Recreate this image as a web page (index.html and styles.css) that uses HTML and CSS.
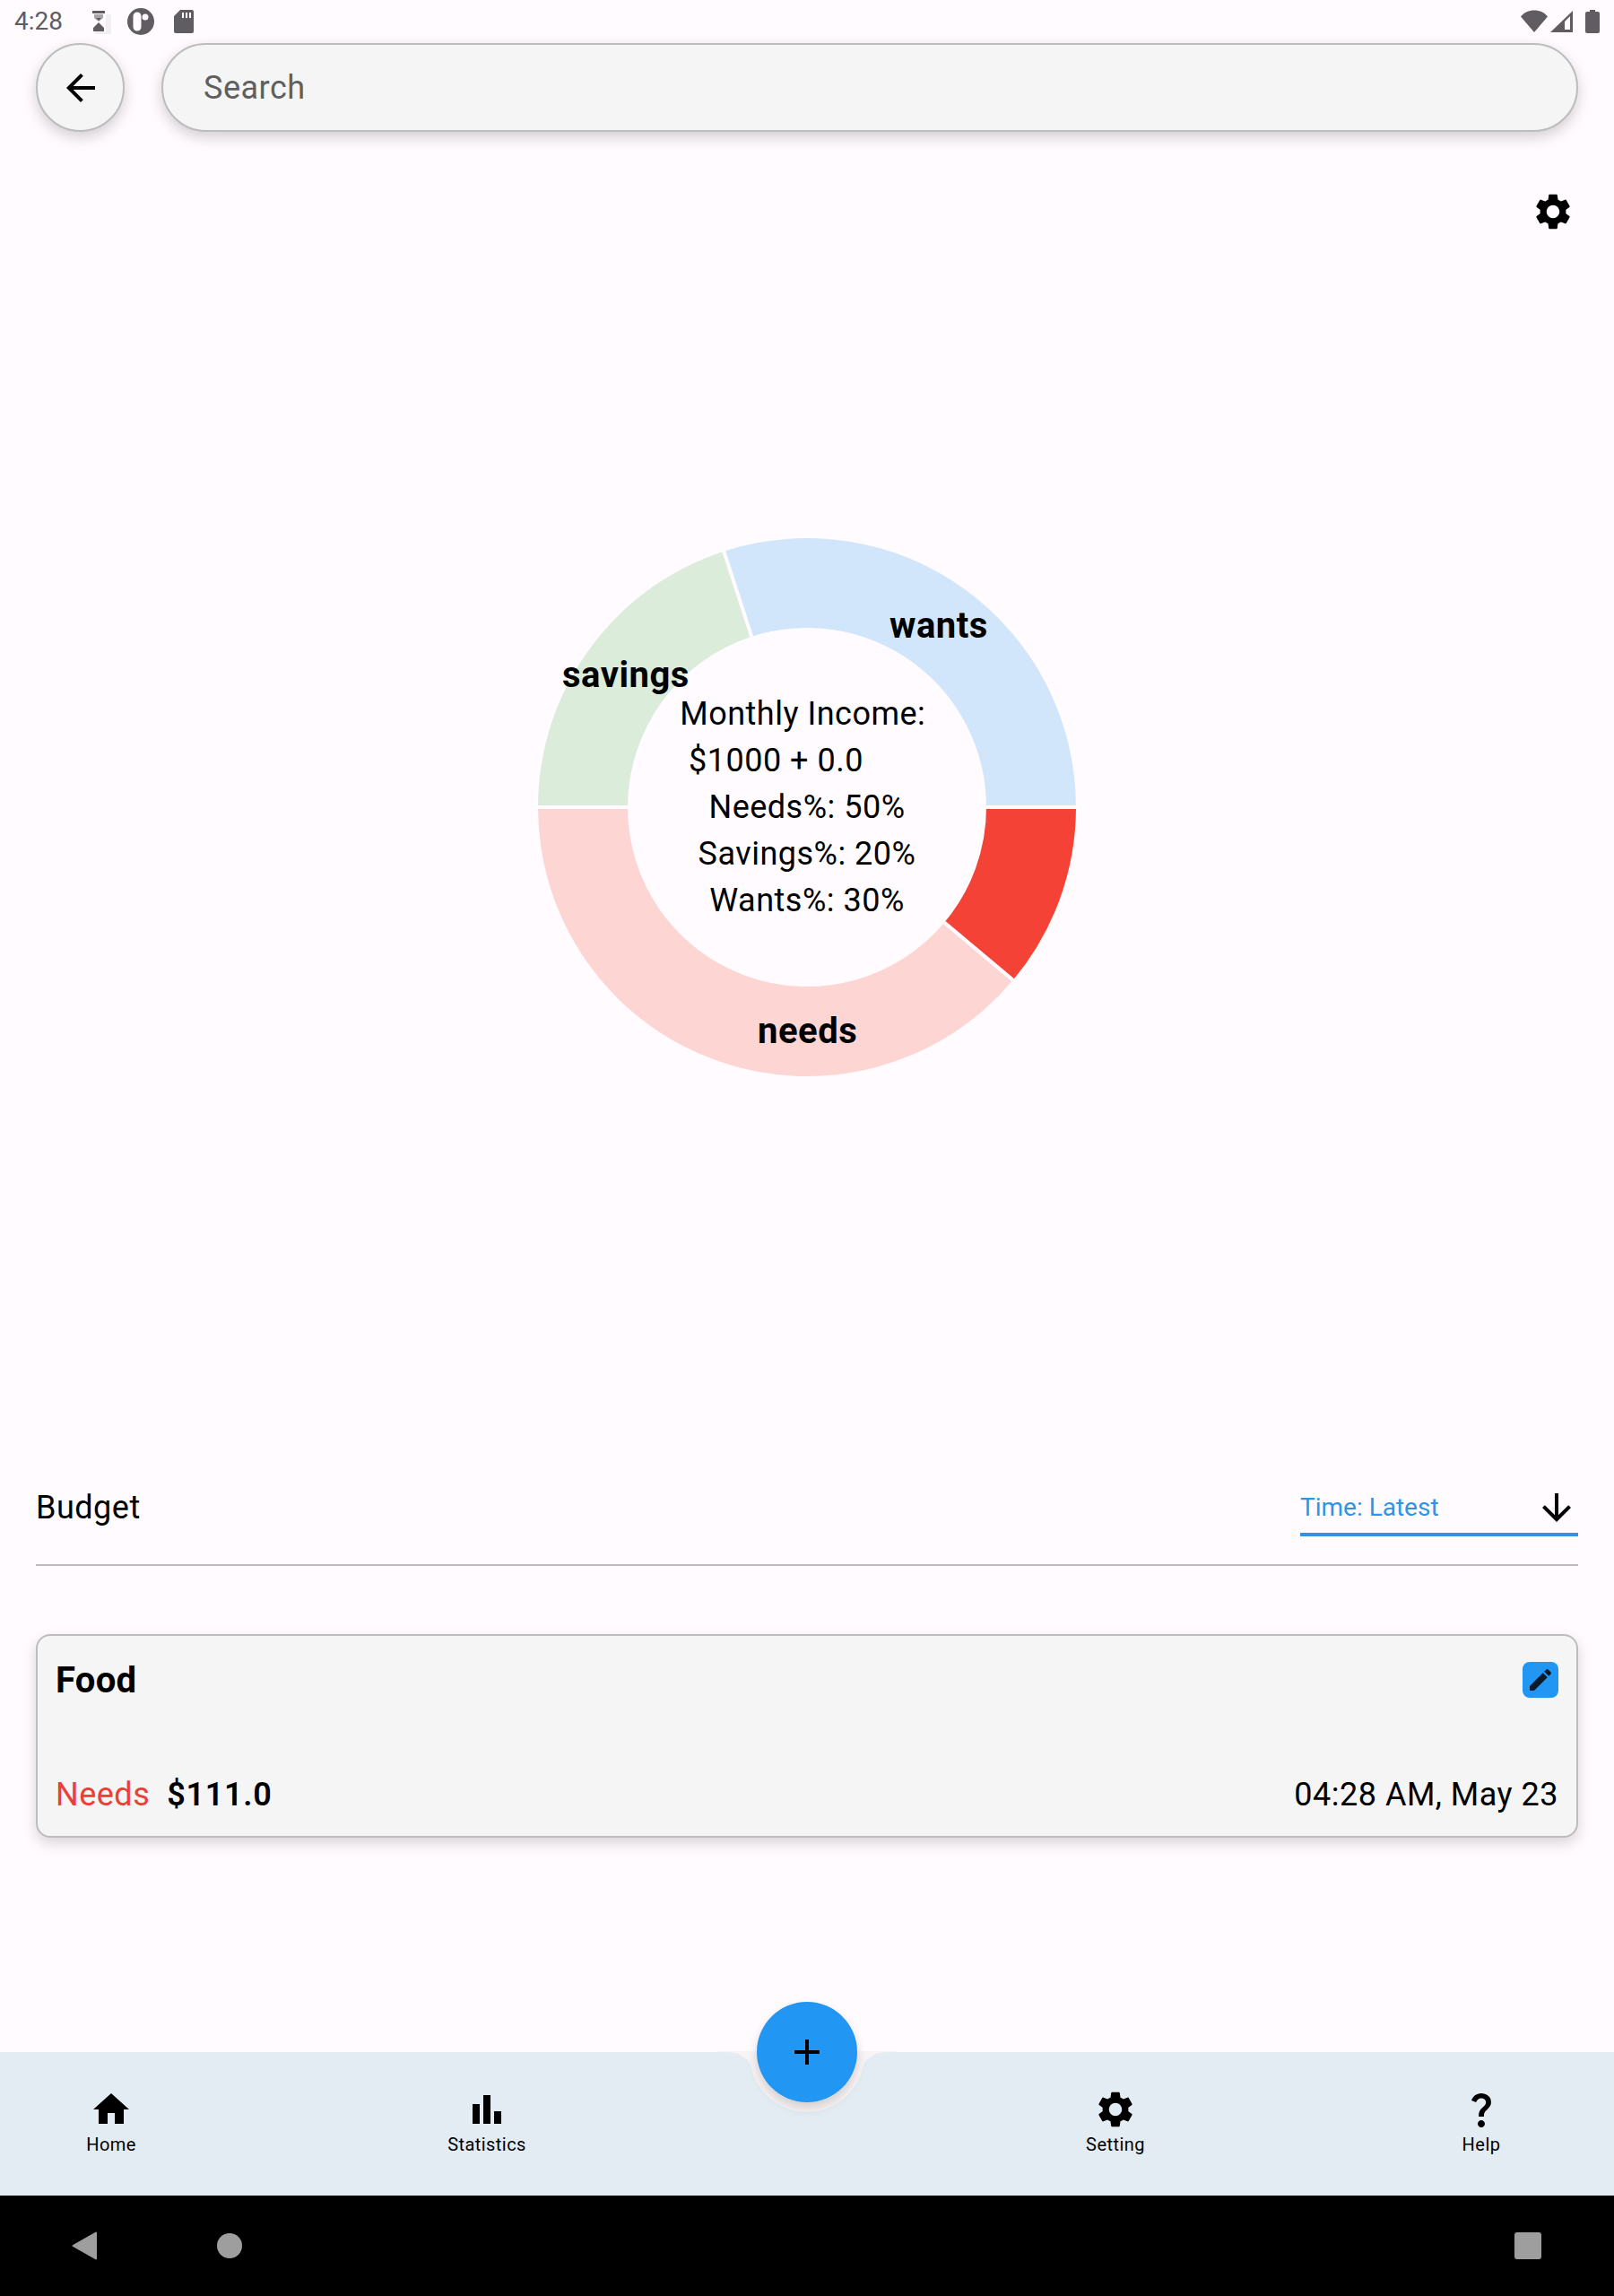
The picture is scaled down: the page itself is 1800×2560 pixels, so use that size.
FILE: index.html
```html
<!DOCTYPE html>
<html lang="en">
<head>
<meta charset="utf-8">
<title>Budget</title>
<link rel="stylesheet" href="styles.css">
</head>
<body>
<div class="screen">
  <div class="status">
    <span class="clock">4:28</span>
    <svg class="st-hour" viewBox="0 0 22 26"><path class="st-faint" d="M16 4h6v22H4v-3h12z"/><path class="st-mid" d="M3 4h10v4L8 12 3 8z"/><path class="st" d="M1 0h14v3H1zM8 13l6 6v4H2v-4zM5 8h6L8 11z"/></svg>
    <svg class="st-p" viewBox="0 0 30 30"><circle class="st" cx="15" cy="15" r="15"/><rect class="st-w" x="6.500" y="4.500" width="9" height="21" rx="4.500"/><circle class="st-w" cx="20" cy="10" r="3.500"/></svg>
    <svg class="st-sd" viewBox="0 0 22 26"><path class="st" d="M7 0h13a2 2 0 0 1 2 2v22a2 2 0 0 1-2 2H2a2 2 0 0 1-2-2V7z"/><path class="st-w" d="M9 3h2v6H9zM13 3h2v6h-2zM17 3h2v6h-2z"/></svg>
    <span class="status-fill"></span>
    <svg class="st-wifi" viewBox="0 0 30 26"><path class="st" d="M0 7.500C3.500 3 9 .5 15 .5S26.500 3 30 7.500L15 25z"/></svg>
    <svg class="st-sig" viewBox="0 0 25 24"><path class="st" d="M25 0v24H0zM22 6l-6 6v9h6z" fill-rule="evenodd"/></svg>
    <svg class="st-bat" viewBox="0 0 16 26"><path class="st" d="M5 0h6v2h3a2 2 0 0 1 2 2v20a2 2 0 0 1-2 2H2a2 2 0 0 1-2-2V4a2 2 0 0 1 2-2h3z"/></svg>
  </div>

  <div class="topbar">
    <div class="back">
      <svg class="i48" viewBox="0 0 24 24"><path d="M20 11H7.830l5.590-5.590L12 4l-8 8 8 8 1.410-1.410L7.830 13H20v-2z"/></svg>
    </div>
    <div class="search">Search</div>
  </div>

  <div class="gear-row">
    <svg class="i48" viewBox="0 0 24 24"><use href="#gear"/></svg>
  </div>

  <div class="chart">
    <svg class="donut" viewBox="0 0 600 600">
      <path class="seg-red" d="M600 300A300 300 0 0 1 529.800 492.800L453.200 428.600A200 200 0 0 0 500 300Z"/>
      <path class="seg-needs" d="M529.800 492.800A300 300 0 0 1 0 300H100A200 200 0 0 0 453.200 428.600Z"/>
      <path class="seg-savings" d="M0 300A300 300 0 0 1 207.300 14.700L238.200 109.800A200 200 0 0 0 100 300Z"/>
      <path class="seg-wants" d="M207.300 14.700A300 300 0 0 1 600 300H500A200 200 0 0 0 238.200 109.800Z"/>
      <path class="seg-gap" d="M100 300H-2M500 300H602M453.200 428.600L531.300 494.100M238.200 109.800L206.700 12.800"/>
    </svg>
    <div class="center-text">
      <div class="center-line">Monthly Income: </div>
      <div class="center-line center-income">$1000 + 0.0       </div>
      <div class="center-line">Needs%: 50%</div>
      <div class="center-line">Savings%: 20%</div>
      <div class="center-line">Wants%: 30%</div>
    </div>
    <span class="seg-label label-wants">wants</span>
    <span class="seg-label label-savings">savings</span>
    <span class="seg-label label-needs">needs</span>
  </div>

  <div class="budget-head">
    <span class="budget-title">Budget</span>
    <div class="dropdown">
      <span>Time: Latest</span>
      <svg class="i48" viewBox="0 0 24 24"><path d="M20 12l-1.410-1.410L13 16.170V4h-2v12.170l-5.580-5.590L4 12l8 8 8-8z"/></svg>
    </div>
  </div>
  <div class="rule"></div>

  <div class="card">
    <div class="card-top">
      <span class="card-name">Food</span>
      <span class="edit">
        <svg class="i32" viewBox="0 0 24 24"><path d="M3 17.250V21h3.750L17.810 9.940l-3.750-3.750L3 17.250zM20.710 7.040c.39-.39.39-1.020 0-1.410l-2.340-2.340c-.39-.39-1.020-.39-1.410 0l-1.830 1.830 3.750 3.750 1.830-1.830z"/></svg>
      </span>
    </div>
    <div class="card-bottom">
      <span class="card-type">Needs</span>
      <span class="card-amount">$111.0</span>
      <span class="card-date">04:28 AM, May 23</span>
    </div>
  </div>

  <div class="spacer"></div>

  <nav class="nav">
    <svg class="notch" viewBox="0 0 200 70"><path d="M0 0H8C22 0 31 4 37 14A64 64 0 0 0 163 14C169 4 178 0 192 0H200V-1H0Z"/></svg>
    <div class="fab">
      <svg class="i48" viewBox="0 0 24 24"><path d="M19 13h-6v6h-2v-6H5v-2h6V5h2v6h6v2z"/></svg>
    </div>
    <a class="nav-item nav-home">
      <svg class="i48" viewBox="0 0 24 24"><path d="M10 20v-6h4v6h5v-8h3L12 3 2 12h3v8z"/></svg>
      <span class="nav-label">Home</span>
    </a>
    <a class="nav-item nav-stats">
      <svg class="i48" viewBox="0 0 24 24"><path d="M4 9h4v11H4zm12 4h4v7h-4zm-6-9h4v16h-4z"/></svg>
      <span class="nav-label">Statistics</span>
    </a>
    <a class="nav-item nav-setting">
      <svg class="i48" viewBox="0 0 24 24"><use href="#gear"/></svg>
      <span class="nav-label">Setting</span>
    </a>
    <a class="nav-item nav-help">
      <svg class="i48" viewBox="0 0 24 24"><path d="M11.070 12.850c.77-1.390 2.250-2.210 3.110-3.440.91-1.290.4-3.700-2.180-3.700-1.690 0-2.520 1.280-2.870 2.340L6.540 6.960C7.250 4.830 9.180 3 11.990 3c2.350 0 3.960 1.070 4.780 2.410.7 1.150 1.110 3.300.03 4.900-1.200 1.770-2.350 2.310-2.970 3.450-.25.46-.35.76-.35 2.240h-2.890c-.01-.78-.13-2.050.48-3.150zM14 20c0 1.100-.9 2-2 2s-2-.9-2-2 .9-2 2-2 2 .9 2 2z"/></svg>
      <span class="nav-label">Help</span>
    </a>
  </nav>

  <div class="sysbar">
    <svg class="sys-back" viewBox="0 0 28 32"><path d="M27 1.500V30.500L1.500 16Z"/></svg>
    <span class="sys-home"></span>
    <span class="sys-fill"></span>
    <span class="sys-recent"></span>
  </div>
</div>

<svg class="defs" width="0" height="0">
  <defs>
    <path id="gear" d="M19.140 12.940c.04-.3.06-.61.06-.94 0-.32-.02-.64-.07-.94l2.030-1.580c.18-.14.23-.41.12-.61l-1.920-3.320c-.12-.22-.37-.29-.59-.22l-2.390.96c-.5-.38-1.030-.7-1.620-.94l-.36-2.540c-.04-.24-.24-.41-.48-.41h-3.840c-.24 0-.43.17-.47.41l-.36 2.540c-.59.24-1.130.57-1.620.94l-2.390-.96c-.22-.08-.47 0-.59.22L2.740 8.870c-.12.21-.08.47.12.61l2.030 1.580c-.05.3-.09.63-.09.94s.02.64.07.94l-2.030 1.580c-.18.14-.23.41-.12.61l1.920 3.320c.12.22.37.29.59.22l2.390-.96c.5.38 1.030.7 1.620.94l.36 2.540c.05.24.24.41.48.41h3.840c.24 0 .44-.17.47-.41l.36-2.540c.59-.24 1.130-.56 1.620-.94l2.390.96c.22.08.47 0 .59-.22l1.920-3.320c.12-.22.07-.47-.12-.61l-2.010-1.580zM12 15.600c-1.980 0-3.600-1.620-3.600-3.600s1.620-3.600 3.600-3.600 3.600 1.620 3.600 3.600-1.620 3.600-3.600 3.600z"/>
  </defs>
</svg>
</body>
</html>
```
FILE: styles.css
```css
* { box-sizing: border-box; }
html, body { margin: 0; padding: 0; }
body { font-family: Roboto, "Liberation Sans", sans-serif; color: #000; background: #fffbfe; }
.defs { position: absolute; }
.i48 { width: 48px; height: 48px; display: block; flex: none; }
.i32 { width: 32px; height: 32px; display: block; }

.screen { width: 1800px; height: 2560px; display: flex; flex-direction: column; position: relative; overflow: hidden; background: #fffbfe; }

.status { height: 48px; display: flex; align-items: flex-start; padding: 0 16px; flex: none; }
.clock { font-size: 28px; line-height: 48px; color: #5f5d61; width: 86px; }
.st { fill: #5f5d61; }
.st-mid { fill: #a8a6a8; }
.st-faint { fill: #f1eff0; }
.st-w { fill: #fffbfe; }
.st-hour { width: 22px; height: 26px; margin-top: 12px; }
.st-p { width: 30px; height: 30px; margin: 9px 0 0 18px; }
.st-sd { width: 22px; height: 26px; margin: 11px 0 0 22px; }
.status-fill { flex: 1; }
.st-wifi { width: 30px; height: 26px; margin-top: 11px; }
.st-sig { width: 25px; height: 24px; margin: 12px 0 0 3px; }
.st-bat { width: 16px; height: 26px; margin: 11px 0 0 14px; }

.topbar { display: flex; gap: 41px; padding: 0 40px; flex: none; }
.back { width: 99px; height: 99px; border-radius: 50%; background: #f4f5f4; border: 2px solid #bdbdbd; box-shadow: 0 6px 16px rgba(0,0,0,.18); display: flex; align-items: center; justify-content: center; flex: none; }
.search { flex: 1; height: 99px; border-radius: 50px; background: #f4f5f4; border: 2px solid #bdbdbd; box-shadow: 0 6px 16px rgba(0,0,0,.18); font-size: 36px; line-height: 97px; letter-spacing: .5px; color: #5f5f60; padding-left: 45px; }

.gear-row { display: flex; justify-content: flex-end; padding: 65px 44px 0 0; flex: none; }

.chart { width: 600px; height: 600px; margin: 340px auto 0; position: relative; flex: none; }
.donut { width: 600px; height: 600px; display: block; overflow: visible; }
.seg-red { fill: #f44336; }
.seg-needs { fill: #fdd6d3; }
.seg-savings { fill: #dbecdb; }
.seg-wants { fill: #d1e6fb; }
.seg-gap { stroke: #fffbfe; stroke-width: 4; fill: none; }
.center-text { position: absolute; left: 100px; top: 170px; width: 400px; text-align: center; font-size: 36px; line-height: 52px; letter-spacing: .5px; }
.center-line { white-space: pre; }
.center-income { padding-right: 3px; }
.seg-label { position: absolute; font-size: 40px; font-weight: 700; line-height: 48px; white-space: pre; letter-spacing: .5px; }
.label-wants { left: 392px; top: 74px; }
.label-savings { left: 27px; top: 129px; }
.label-needs { left: 245px; top: 526px; }

.budget-head { margin-top: 457px; padding: 0 40px; display: flex; justify-content: space-between; height: 56px; flex: none; }
.budget-title { font-size: 36px; line-height: 48px; letter-spacing: .5px; }
.dropdown { width: 310px; height: 56px; border-bottom: 4px solid #2f94e8; display: flex; justify-content: space-between; align-items: flex-start; color: #2f94e8; font-size: 28px; line-height: 48px; }
.rule { height: 2px; background: #bdbabd; margin: 31px 40px 0; flex: none; }

.card { margin: 76px 40px 0; height: 227px; border: 2px solid #bdbdbd; border-radius: 16px; background: #f4f5f4; box-shadow: 0 6px 16px rgba(0,0,0,.16); padding: 30px 20px 0 20px; flex: none; }
.card-top { display: flex; justify-content: space-between; align-items: flex-start; height: 121px; }
.card-name { font-size: 40px; font-weight: 700; line-height: 40px; letter-spacing: .3px; }
.edit { width: 40px; height: 40px; border-radius: 8px; background: #2196f3; display: flex; align-items: center; justify-content: center; fill: #0b1a28; margin-top: -1px; }
.card-bottom { display: flex; align-items: baseline; font-size: 36px; line-height: 52px; }
.card-type { color: #ea4036; letter-spacing: .5px; }
.card-amount { margin-left: 19px; font-weight: 600; letter-spacing: .7px; }
.card-date { margin-left: auto; letter-spacing: .5px; }

.spacer { flex: 1; }

.nav { height: 160px; background: #e3ecf3; position: relative; display: flex; flex: none; padding-top: 40px; }
.notch { position: absolute; left: 800px; top: 0; width: 200px; height: 70px; fill: #f8f4f5; overflow: visible; }
.fab { position: absolute; left: 844px; top: -56px; width: 112px; height: 112px; border-radius: 50%; background: #2196f3; box-shadow: 0 6px 12px rgba(0,0,0,.16); display: flex; align-items: center; justify-content: center; }
.nav-item { width: 120px; display: flex; flex-direction: column; align-items: center; font-size: 20px; line-height: 24px; letter-spacing: .45px; }
.nav-label { margin-top: 3px; }
.nav-home { margin-left: 64px; }
.nav-stats { margin-left: 299px; }
.nav-setting { margin-left: 581px; }
.nav-help { margin-left: 288px; }

.sysbar { height: 112px; background: #000; display: flex; align-items: center; padding: 0 81px 0 80px; flex: none; }
.sys-back { width: 28px; height: 32px; fill: #9e9e9e; stroke: #9e9e9e; stroke-width: 2; stroke-linejoin: round; overflow: visible; }
.sys-home { width: 28px; height: 28px; border-radius: 50%; background: #9e9e9e; margin-left: 134px; }
.sys-fill { flex: 1; }
.sys-recent { width: 30px; height: 30px; border-radius: 3px; background: #9e9e9e; }
```
